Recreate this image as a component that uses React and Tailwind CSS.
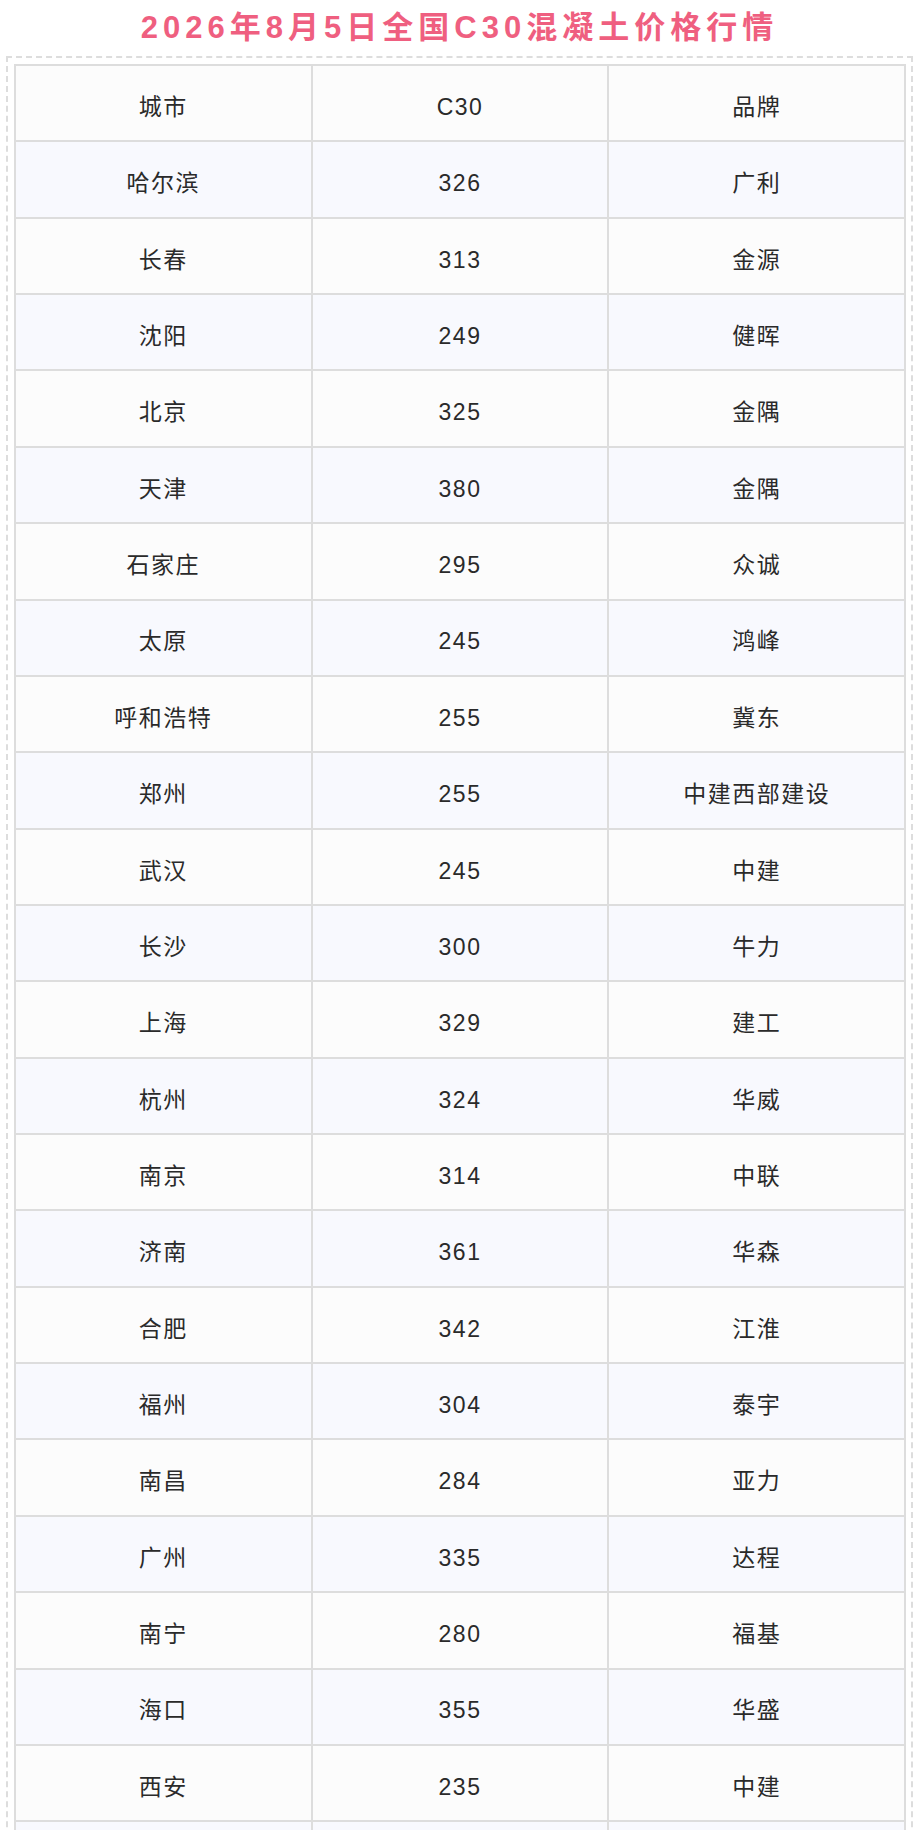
import React from "react";

const rows = [
  ["哈尔滨", "326", "广利"],
  ["长春", "313", "金源"],
  ["沈阳", "249", "健晖"],
  ["北京", "325", "金隅"],
  ["天津", "380", "金隅"],
  ["石家庄", "295", "众诚"],
  ["太原", "245", "鸿峰"],
  ["呼和浩特", "255", "冀东"],
  ["郑州", "255", "中建西部建设"],
  ["武汉", "245", "中建"],
  ["长沙", "300", "牛力"],
  ["上海", "329", "建工"],
  ["杭州", "324", "华威"],
  ["南京", "314", "中联"],
  ["济南", "361", "华森"],
  ["合肥", "342", "江淮"],
  ["福州", "304", "泰宇"],
  ["南昌", "284", "亚力"],
  ["广州", "335", "达程"],
  ["南宁", "280", "福基"],
  ["海口", "355", "华盛"],
  ["西安", "235", "中建"],
  ["", "", ""],
];

function Row({ cells, blue }) {
  return (
    <div className={`grid grid-cols-3 ${blue ? "bg-[#f8f9fe]" : "bg-[#fcfcfc]"}`}>
      {cells.map((c, i) => (
        <div
          key={i}
          className="h-[76.36px] border-r-2 border-b-2 border-[#dddddd] flex items-center justify-center text-[23px] tracking-[1.5px] text-[#2a2a2a] pt-[8px]"
        >
          {c}
        </div>
      ))}
    </div>
  );
}

export default function App() {
  return (
    <div
      className="bg-white w-[914px] h-[1830px] overflow-hidden"
      style={{ fontFamily: '"Liberation Sans", "Noto Sans CJK SC", sans-serif' }}
    >
      <div className="h-[54px] flex items-center justify-center pl-[5px]">
        <h1 className="text-[31px] font-bold tracking-[5px] text-[#ef5f80] leading-none">
          2026年8月5日全国C30混凝土价格行情
        </h1>
      </div>
      <div className="mt-[2px] ml-[6px] w-[907px] border-2 border-dashed border-[#dddddd] p-[6px] pr-[5px]">
        <div className="border-t-2 border-l-2 border-[#dddddd]">
          <Row cells={["城市", "C30", "品牌"]} blue={false} />
          {rows.map((r, i) => (
            <Row key={i} cells={r} blue={i % 2 === 0} />
          ))}
        </div>
      </div>
    </div>
  );
}
